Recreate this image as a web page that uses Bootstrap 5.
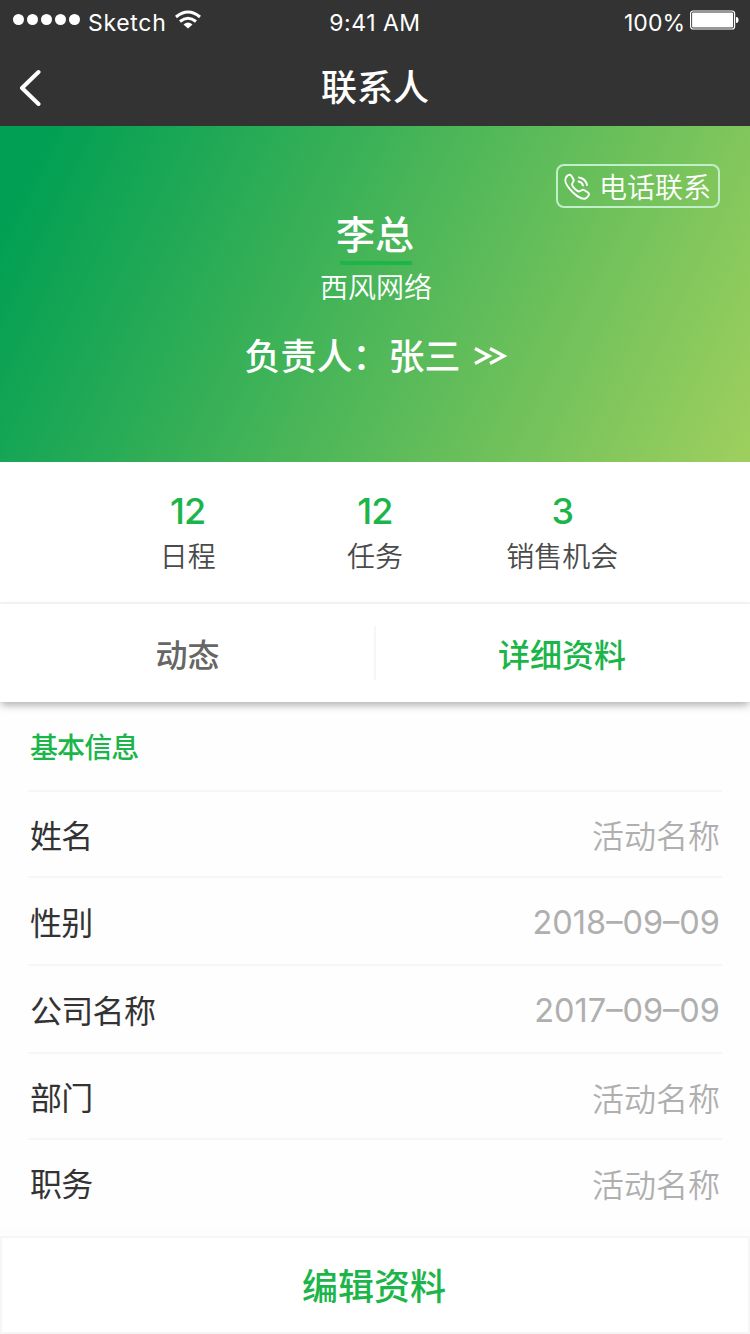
<!DOCTYPE html>
<html lang="zh-CN">
<head>
<meta charset="utf-8">
<meta name="viewport" content="width=device-width, initial-scale=1">
<title>联系人</title>
<link rel="stylesheet" href="https://cdn.jsdelivr.net/npm/bootstrap@5.3.0/dist/css/bootstrap.min.css">
<style>
  :root { --brand: #1bb54a; --line: #f6f6f6; }
  body { font-family: Inter, "Noto Sans CJK SC", sans-serif; background: #fdfdfd; color: #333; line-height: 1; }
  .screen { width: 750px; height: 1334px; }
  .bar-top { background: #333; height: 126px; }
  .status { height: 40px; font-size: 23px; padding: 3px 11px 0 13px; }
  .status > div { flex: 1 1 0; }
  .signal { margin-top: -5px; }
  .signal i { width: 11px; height: 11px; border-radius: 50%; background: #fff; margin-right: 3px; }
  .carrier { margin: 3px 8px 0 5px; letter-spacing: .7px; }
  .wifi { margin-top: -5px; }
  .clock { letter-spacing: .5px; padding-right: 2px; }
  .battery { margin-top: -4px; }
  .title-row { height: 86px; padding: 0 19px; }
  .title-row > * { flex: 1 1 0; }
  .title-row h1 { padding-top: 12px; }
  .back { margin-top: 9px; }
  .t36 { font-size: 36px; }
  .t32 { font-size: 32px; }
  .t28 { font-size: 28px; }
  .medium { font-weight: 500; }
  .thin { font-weight: 350; }
  .brand { color: var(--brand); }
  .hero { height: 336px; padding: 38px 30px 0; background: linear-gradient(116deg, #009f53 5%, #9dcf5e 99%); }
  .call { width: 164px; height: 44px; border: 2px solid #c0efc9; border-radius: 8px; padding: 3px 7px 0 5px; }
  .call svg { margin-top: -2px; }
  .person { font-size: 39px; height: 53px; padding-top: 4px; margin-left: 2px; }
  .rule { width: 72px; height: 4px; background: var(--brand); margin-left: 2px; }
  .company { margin: 9px 0 0 2px; }
  .owner { margin: 37px 0 0 2px; gap: 13px; }
  .owner svg { margin-top: -2px; }
  .stats { height: 142px; border-bottom: 2px solid var(--line); padding: 31px 94px 0 94px; z-index: 1; }
  .stats .t36 { letter-spacing: -.8px; }
  .stats .t28 { color: #4a4a4a; margin-top: 14px; }
  .tabs { height: 98px; box-shadow: 0 4px 8px -1px rgba(0,0,0,.32); z-index: 1; }
  .tabs a { padding-top: 6px; }
  .tabs .divider { width: 2px; height: 54px; background: var(--line); }
  .tabs .idle { color: #666; padding-left: 1px; }
  .tabs .brand { padding-right: 2px; }
  .section { height: 90px; padding: 30px 2px 0; border-bottom: 2px solid var(--line); letter-spacing: -.9px; }
  .info { padding: 0 28px; background: #fefefe; }
  .field { padding: 5px 2px 0; height: 88px; border-bottom: 2px solid var(--line); }
  .field.short { height: 86px; }
  .field dt { font-weight: 400; letter-spacing: -.7px; }
  .field dd { margin: 0; color: #afafaf; }
  .date { font-size: 32.5px; font-weight: 400; padding-bottom: 1px; }
  .lower { padding-top: 3px; }
  .last { padding-top: 1px; border: 0; }
  .edit { height: 98px; border: 2px solid var(--line); border-radius: 0; padding: 3px 2px 0 0; background: #fff; }
</style>
</head>
<body>
<div class="screen d-flex flex-column overflow-hidden">
  <header class="bar-top text-white">
    <div class="status d-flex align-items-center">
      <div class="d-flex align-items-center">
        <span class="signal d-flex"><i></i><i></i><i></i><i></i><i></i></span>
        <span class="carrier">Sketch</span>
        <svg class="wifi" width="26" height="19" viewBox="0 0 26 19" fill="none" stroke="#fff" stroke-width="3">
          <path d="M1 7Q13-3 25 7M5 11.500Q13 5 21 11.500"/><path d="M8.500 14.500Q13 10.500 17.500 14.500L13 18.500Z" fill="#fff" stroke="none"/>
        </svg>
      </div>
      <div class="clock text-center pt-1">9:41 AM</div>
      <div class="d-flex justify-content-end align-items-center">
        <span class="pt-1">100%</span>
        <svg class="battery ms-1" width="50" height="20" viewBox="0 0 50 20">
          <rect x="1.600" y="1" width="44" height="18" rx="2.500" fill="none" stroke="#fff" stroke-width="1.200"/>
          <rect x="3.100" y="2.500" width="41" height="15" rx="1" fill="#fff"/><path d="M47 7q2.500 0 2.500 2v2q0 2-2.500 2z" fill="#fff"/>
        </svg>
      </div>
    </div>
    <div class="title-row d-flex align-items-center">
      <div><svg class="back" width="22" height="38" viewBox="0 0 22 38" fill="none" stroke="#fff" stroke-width="4" stroke-linecap="round" stroke-linejoin="round"><path d="M19.500 3L3 19 19.500 35"/></svg></div>
      <h1 class="t36 medium text-center m-0">联系人</h1>
      <div></div>
    </div>
  </header>

  <section class="hero text-white d-flex flex-column align-items-center">
    <button type="button" class="call btn thin t28 text-white lh-1 d-flex align-items-center justify-content-between align-self-end">
      <svg width="28" height="28" viewBox="0 0 28 28" fill="none" stroke="#fff" stroke-width="1.900" stroke-linecap="round" stroke-linejoin="round">
        <path d="M4 3C6 1 7.500 1.500 8.500 3L10.500 6.500C11.500 8.500 9 9.500 9 11.500C9.500 14 13.500 18 16 18.500C18 18.500 19 16 21 17L25 19.500C27 21 25.500 23 24 24.500C21 27.500 15 24.500 10 19.500C4 13.500-.5 7.500 4 3Z"/>
        <path d="M15.500 8.500Q19 9 20 12.500M16 4.500Q22.500 5.500 24 12"/>
      </svg>
      <span>电话联系</span>
    </button>
    <h2 class="person medium m-0">李总</h2>
    <div class="rule"></div>
    <div class="company t28 thin">西风网络</div>
    <div class="owner t36 medium d-flex align-items-center">
      <span>负责人：张三</span>
      <svg width="34" height="20" viewBox="0 0 34 20" fill="none" stroke="#fff" stroke-width="3.200"><path d="M1 2.500L15 10 1 17.500M16 2.500L30 10 16 17.500"/></svg>
    </div>
  </section>

  <section class="stats row g-0 text-center bg-white position-relative">
    <div class="col-4"><div class="t36 medium brand">12</div><div class="t28 thin">日程</div></div>
    <div class="col-4"><div class="t36 medium brand">12</div><div class="t28 thin">任务</div></div>
    <div class="col-4"><div class="t36 medium brand">3</div><div class="t28 thin">销售机会</div></div>
  </section>

  <nav class="tabs d-flex align-items-center text-center bg-white t32 medium flex-shrink-0">
    <a class="idle flex-fill w-50 text-decoration-none">动态</a>
    <span class="divider flex-shrink-0"></span>
    <a class="brand flex-fill w-50 text-decoration-none">详细资料</a>
  </nav>

  <main class="info">
    <h3 class="section t28 medium brand m-0">基本信息</h3>
    <dl class="t32 m-0">
      <div class="field short d-flex align-items-center justify-content-between"><dt>姓名</dt><dd class="thin">活动名称</dd></div>
      <div class="field d-flex align-items-center justify-content-between"><dt>性别</dt><dd class="date">2018–09–09</dd></div>
      <div class="field d-flex align-items-center justify-content-between"><dt>公司名称</dt><dd class="date">2017–09–09</dd></div>
      <div class="field short d-flex align-items-center justify-content-between"><dt>部门</dt><dd class="thin lower">活动名称</dd></div>
      <div class="field last d-flex align-items-center justify-content-between"><dt>职务</dt><dd class="thin lower">活动名称</dd></div>
    </dl>
  </main>
  <button type="button" class="edit btn brand t36 medium lh-1 flex-shrink-0 mt-auto">编辑资料</button>
</div>
<script src="https://cdn.jsdelivr.net/npm/bootstrap@5.3.0/dist/js/bootstrap.bundle.min.js"></script>
</body>
</html>
